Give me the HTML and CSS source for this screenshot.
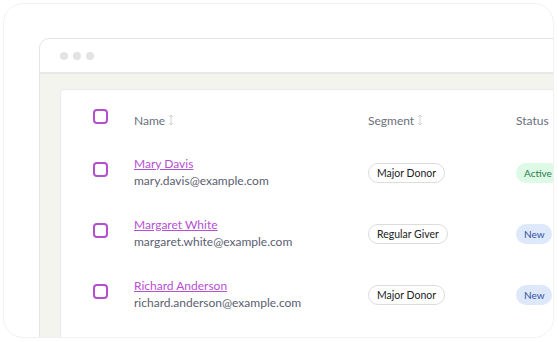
FILE: index.html
```html
<!DOCTYPE html>
<html lang="en">
<head>
  <meta charset="UTF-8">
  <title>Donors</title>
  <link rel="stylesheet" href="styles.css">
</head>
<body>

<div class="card">
  <div class="window">
    <div class="toolbar">
      <span class="dot"></span><span class="dot"></span><span class="dot"></span>
    </div>
    <div class="canvas">
      <div class="panel">
        <div class="row head">
          <span class="check"></span>
          <span class="th">Name <svg class="sort" viewBox="0 0 6 12"><path d="M3 1v10M1 3l2-2 2 2M1 9l2 2 2-2"/></svg></span>
          <span class="th">Segment <svg class="sort" viewBox="0 0 6 12"><path d="M3 1v10M1 3l2-2 2 2M1 9l2 2 2-2"/></svg></span>
          <span class="th">Status <svg class="sort" viewBox="0 0 6 12"><path d="M3 1v10M1 3l2-2 2 2M1 9l2 2 2-2"/></svg></span>
        </div>

        <div class="row">
          <span class="check"></span>
          <div class="who">
            <a href="#">Mary Davis</a>
            <span class="mail">mary.davis@example.com</span>
          </div>
          <div><span class="pill">Major Donor</span></div>
          <div><span class="status active">Active</span></div>
        </div>

        <div class="row">
          <span class="check"></span>
          <div class="who">
            <a href="#">Margaret White</a>
            <span class="mail">margaret.white@example.com</span>
          </div>
          <div><span class="pill">Regular Giver</span></div>
          <div><span class="status new">New</span></div>
        </div>

        <div class="row">
          <span class="check"></span>
          <div class="who">
            <a href="#">Richard Anderson</a>
            <span class="mail">richard.anderson@example.com</span>
          </div>
          <div><span class="pill">Major Donor</span></div>
          <div><span class="status new">New</span></div>
        </div>
      </div>
    </div>
  </div>
</div>

</body>
</html>
```

FILE: styles.css
```css
body { margin: 0; padding: 3px; background: #fff; font-family: Lato, "Open Sans", sans-serif; }
.card { width: 551px; height: 335px; border: 1px solid #f1f1f1; border-radius: 20px; overflow: hidden; padding: 34px 0 0 35px; box-sizing: border-box; }
.window { width: 640px; border: 1px solid #e4e4e4; border-radius: 10px 0 0 0; background: #fff; }
.toolbar { height: 33px; display: flex; align-items: center; gap: 5px; padding-left: 20px; border-bottom: 2px solid #e8e8e6; }
.dot { width: 8px; height: 8px; border-radius: 50%; background: #e3e3e3; }
.canvas { background: #f4f4ef; padding: 15px 0 0 20px; height: 262px; }
.panel { background: #fff; border: 1px solid #e8e8f0; border-radius: 4px 0 0 0; padding: 9px 0 0 32px; height: 100%; }
.row { display: grid; grid-template-columns: 41px 234px 148px 1fr; align-items: center; height: 61px; }
.row.head { height: 42px; }
.check { width: 11px; height: 11px; border: 2px solid #b44fd0; border-radius: 4px; margin-bottom: 4px; }
.head .check { margin-bottom: 8px; }
.th { font-size: 12px; color: #6b6f7b; display: flex; align-items: center; gap: 3px; }
.sort { width: 6px; height: 12px; fill: none; stroke: #d2d2d6; stroke-width: 1; }
.who { display: flex; flex-direction: column; font-size: 12px; line-height: 17px; }
.who a { color: #b64fd2; text-decoration: underline; }
.mail { color: #5a6070; }
.pill { display: inline-block; font-size: 10.5px; color: #222; border: 1px solid #dcdcdc; border-radius: 10px; padding: 3px 8px; line-height: 12px; }
.status { display: inline-block; font-size: 10px; border-radius: 10px; padding: 4px 7px 4px 8px; line-height: 12px; }
.active { background: #dcfae6; color: #2f7a4c; }
.new { background: #dde8fb; color: #3450a0; }
```
